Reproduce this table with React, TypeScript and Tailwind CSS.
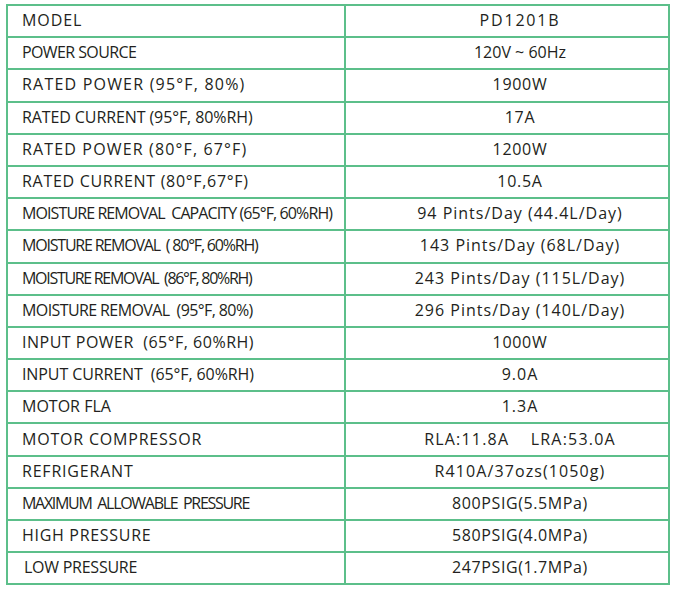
const ROWS: { label: string; value: string; lt: string; vt: string }[] = [
  { label: 'MODEL', value: 'PD1201B', lt: 'tracking-[0.9px]', vt: 'tracking-[1.8px]' },
  { label: 'POWER SOURCE', value: '120V ~ 60Hz', lt: 'tracking-[-0.6px]', vt: 'tracking-[0px]' },
  { label: 'RATED POWER (95°F, 80%)', value: '1900W', lt: 'tracking-[1.2px]', vt: 'tracking-[0.7px]' },
  { label: 'RATED CURRENT (95°F, 80%RH)', value: '17A', lt: 'tracking-[-0.1px]', vt: 'tracking-[0.7px]' },
  { label: 'RATED POWER (80°F, 67°F)', value: '1200W', lt: 'tracking-[1.15px]', vt: 'tracking-[0.7px]' },
  { label: 'RATED CURRENT (80°F,67°F)', value: '10.5A', lt: 'tracking-[0.7px]', vt: 'tracking-[0.7px]' },
  { label: 'MOISTURE REMOVAL  CAPACITY (65°F, 60%RH)', value: '94 Pints/Day (44.4L/Day)', lt: 'tracking-[-0.9px]', vt: 'tracking-[1px]' },
  { label: 'MOISTURE REMOVAL  ( 80°F, 60%RH)', value: '143 Pints/Day (68L/Day)', lt: 'tracking-[-1.2px]', vt: 'tracking-[1px]' },
  { label: 'MOISTURE REMOVAL  (86°F, 80%RH)', value: '243 Pints/Day (115L/Day)', lt: 'tracking-[-1.3px]', vt: 'tracking-[1px]' },
  { label: 'MOISTURE REMOVAL  (95°F, 80%)', value: '296 Pints/Day (140L/Day)', lt: 'tracking-[-0.6px]', vt: 'tracking-[1px]' },
  { label: 'INPUT POWER  (65°F, 60%RH)', value: '1000W', lt: 'tracking-[0.5px]', vt: 'tracking-[0.7px]' },
  { label: 'INPUT CURRENT  (65°F, 60%RH)', value: '9.0A', lt: 'tracking-[-0.1px]', vt: 'tracking-[1px]' },
  { label: 'MOTOR FLA', value: '1.3A', lt: 'tracking-[0px]', vt: 'tracking-[1px]' },
  { label: 'MOTOR COMPRESSOR', value: 'RLA:11.8A    LRA:53.0A', lt: 'tracking-[0.8px]', vt: 'tracking-[1.2px]' },
  { label: 'REFRIGERANT', value: 'R410A/37ozs(1050g)', lt: 'tracking-[0.8px]', vt: 'tracking-[1.1px]' },
  { label: 'MAXIMUM  ALLOWABLE  PRESSURE', value: '800PSIG(5.5MPa)', lt: 'tracking-[-1.3px]', vt: 'tracking-[0.6px]' },
  { label: 'HIGH PRESSURE', value: '580PSIG(4.0MPa)', lt: 'tracking-[0.7px]', vt: 'tracking-[0.6px]' },
  { label: 'LOW PRESSURE', value: '247PSIG(1.7MPa)', lt: 'tracking-[-0.25px]', vt: 'tracking-[0.6px]' },
]

export default function App() {
  return (
    <div className="w-[676px] h-[590px] bg-white pt-[4px] pl-[6px]" style={{ fontFamily: '"Open Sans", "Noto Sans", sans-serif' }}>
      <div className="w-[664px] grid grid-cols-[336px_322px] gap-[2px] p-[2px] bg-[#5cbf8a]">
        {ROWS.map((r, i) => (
          <div key={r.label} className="contents">
            <div className={`h-[30.2px] bg-white flex items-center pb-[2px] ${i === 17 ? 'pl-[16px]' : 'pl-[14px]'} text-[16px] text-[#231f20] whitespace-pre ${r.lt}`}>
              {r.label}
            </div>
            <div className={`h-[30.2px] bg-white flex items-center justify-center pb-[2px] pl-[26px] text-[16px] text-[#231f20] whitespace-pre ${r.vt}`}>
              {r.value}
            </div>
          </div>
        ))}
      </div>
    </div>
  )
}
